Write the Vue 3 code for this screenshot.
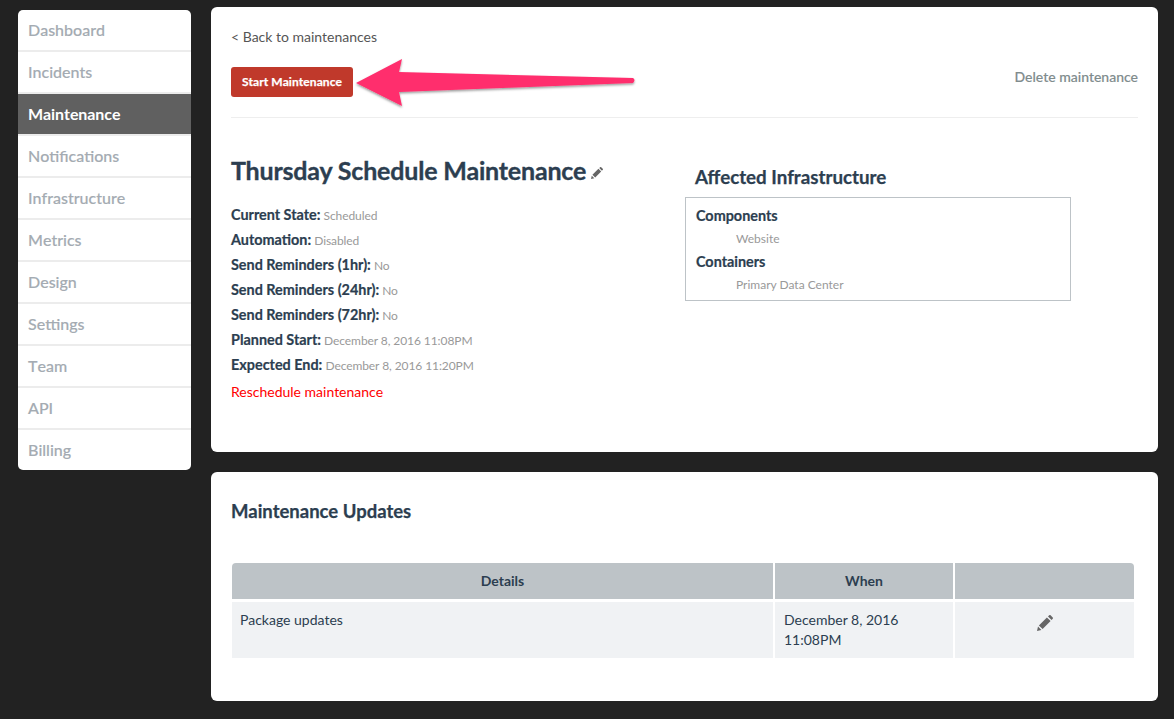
<template>
  <div class="page">
    <nav class="sidebar">
      <a
        v-for="item in navItems"
        :key="item"
        class="nav-item"
        :class="{ 'nav-item--active': item === 'Maintenance' }"
      >{{ item }}</a>
    </nav>

    <main class="content">
      <section class="card card--detail">
        <svg class="arrow" width="300" height="70" viewBox="0 0 300 70" aria-hidden="true">
          <defs>
            <filter id="arrow-shadow" x="-5%" y="-10%" width="110%" height="130%">
              <feDropShadow dx="0" dy="1.5" stdDeviation="1.2" flood-color="#000" flood-opacity="0.4" />
            </filter>
          </defs>
          <path
            d="M10 30 L56 6 L53 19 L287 25 Q290 27 287 30 L53 39 L56 53 Z"
            fill="#ff2e6d"
            filter="url(#arrow-shadow)"
          />
        </svg>

        <a class="back-link">&lt; Back to maintenances</a>

        <div class="actions">
          <button class="start-btn" type="button">Start Maintenance</button>
          <a class="delete-link">Delete maintenance</a>
        </div>

        <div class="summary">
          <div class="summary-main">
            <h1 class="title">
              Thursday Schedule Maintenance
              <svg class="pencil pencil--small" viewBox="0 0 16 16" aria-hidden="true">
                <path :d="pencilPath" />
              </svg>
            </h1>
            <ul class="facts">
              <li v-for="fact in facts" :key="fact.label" class="fact">
                <strong>{{ fact.label }}:</strong> <span>{{ fact.value }}</span>
              </li>
            </ul>
            <a class="reschedule">Reschedule maintenance</a>
          </div>

          <div class="summary-side">
            <h2 class="side-title">Affected Infrastructure</h2>
            <div class="infra-box">
              <template v-for="group in infrastructure" :key="group.name">
                <h3 class="infra-name">{{ group.name }}</h3>
                <p class="infra-item">{{ group.item }}</p>
              </template>
            </div>
          </div>
        </div>
      </section>

      <section class="card card--updates">
        <h2 class="updates-title">Maintenance Updates</h2>
        <table class="updates">
          <thead>
            <tr>
              <th class="col-details">Details</th>
              <th class="col-when">When</th>
              <th class="col-edit"></th>
            </tr>
          </thead>
          <tbody>
            <tr>
              <td>Package updates</td>
              <td>December 8, 2016<br />11:08PM</td>
              <td class="edit-cell">
                <svg class="pencil pencil--large" viewBox="0 0 16 16" aria-hidden="true">
                  <path :d="pencilPath" />
                </svg>
              </td>
            </tr>
          </tbody>
        </table>
      </section>
    </main>
  </div>
</template>

<script setup>
// solid pencil: tip, body and eraser as three separate pieces
const pencilPath = 'M0 16 L1 11.6 L4.4 15 Z M1.9 10.4 L9.9 2.4 L13.6 6.1 L5.6 14.1 Z M11 1.4 L12.2 .3 a1 1 0 0 1 1.4 0 L15.7 2.4 a1 1 0 0 1 0 1.4 L14.6 5 Z'

const navItems = [
  'Dashboard',
  'Incidents',
  'Maintenance',
  'Notifications',
  'Infrastructure',
  'Metrics',
  'Design',
  'Settings',
  'Team',
  'API',
  'Billing'
]

const facts = [
  { label: 'Current State', value: 'Scheduled' },
  { label: 'Automation', value: 'Disabled' },
  { label: 'Send Reminders (1hr)', value: 'No' },
  { label: 'Send Reminders (24hr)', value: 'No' },
  { label: 'Send Reminders (72hr)', value: 'No' },
  { label: 'Planned Start', value: 'December 8, 2016 11:08PM' },
  { label: 'Expected End', value: 'December 8, 2016 11:20PM' }
]

const infrastructure = [
  { name: 'Components', item: 'Website' },
  { name: 'Containers', item: 'Primary Data Center' }
]
</script>

<style>
html,
body {
  background: #222;
}
</style>

<style scoped>
.page {
  display: flex;
  align-items: flex-start;
  gap: 20px;
  height: 719px;
  padding: 7px 16px 0 18px;
  box-sizing: border-box;
  overflow: hidden;
  background: #222;
  font-family: Lato, "Open Sans", sans-serif;
  color: #2c3e50;
}

.sidebar {
  display: flex;
  flex-direction: column;
  flex: none;
  width: 173px;
  margin-top: 3px;
  border-radius: 5px;
  overflow: hidden;
  background: #fff;
}

.nav-item {
  display: block;
  height: 40px;
  padding-left: 10px;
  border-bottom: 2px solid #ececec;
  font-size: 16px;
  font-weight: 500;
  line-height: 40px;
  color: #a4abb2;
  font-kerning: none;
  -webkit-text-stroke: 0.15px #a4abb2;
}

.nav-item:last-child {
  border-bottom: 0;
}

.nav-item--active {
  background: #606060;
  color: #fff;
  font-weight: 700;
  -webkit-text-stroke: 0;
  letter-spacing: -0.08px;
}

.content {
  display: flex;
  flex-direction: column;
  flex: 1;
  gap: 20px;
  min-width: 0;
}

.card {
  position: relative;
  box-sizing: border-box;
  padding: 0 20px;
  border-radius: 6px;
  background: #fff;
}

.card--detail {
  height: 445px;
  padding-top: 21px;
}

.card--updates {
  height: 229px;
  padding-top: 27px;
}

.arrow {
  position: absolute;
  left: 135px;
  top: 46px;
}

.back-link {
  display: block;
  font-size: 14px;
  line-height: 18px;
  color: #555;
}

.actions {
  display: flex;
  justify-content: space-between;
  align-items: flex-start;
  height: 50px;
  margin-top: 21px;
  border-bottom: 1px solid #eee;
}

.start-btn {
  width: 122px;
  height: 30px;
  padding: 0;
  border: 0;
  border-radius: 3px;
  background: #c0392b;
  color: #fff;
  font: 700 12px/30px Lato, sans-serif;
  letter-spacing: 0.1px;
  -webkit-text-stroke: 0.25px #fff;
}

.delete-link {
  font-size: 14px;
  font-weight: 500;
  line-height: 20px;
  color: #7f8c8d;
  -webkit-text-stroke: 0.15px #7f8c8d;
}

.summary {
  display: flex;
}

.summary-main {
  width: 454px;
  flex: none;
}

.title {
  margin: 36px 0 0;
  font-size: 25px;
  font-weight: 700;
  line-height: 32px;
  letter-spacing: -0.18px;
  -webkit-text-stroke: 0.35px #2c3e50;
}

.pencil {
  fill: #666;
  stroke: none;
}

.pencil--small {
  width: 12px;
  height: 12px;
  margin-left: -1px;
  vertical-align: 1px;
  -webkit-text-stroke: 0;
}

.pencil--large {
  display: block;
  width: 16px;
  height: 16px;
  margin: 0 auto;
}

.facts {
  margin: 16px 0 0;
  padding: 0;
  list-style: none;
}

.fact {
  height: 25px;
  font-size: 12px;
  line-height: 25px;
  color: #999;
}

.fact span {
  letter-spacing: -0.08px;
}

.fact strong {
  font-size: 14.4px;
  color: #2c3e50;
  -webkit-text-stroke: 0.2px #2c3e50;
}

.reschedule {
  display: block;
  margin-top: 5px;
  font-size: 14px;
  line-height: 20px;
  color: #f00;
}

.summary-side {
  flex: 1;
}

.side-title {
  margin: 47px 0 0 10px;
  font-size: 18.75px;
  font-weight: 700;
  line-height: 24px;
  -webkit-text-stroke: 0.25px #2c3e50;
}

.infra-box {
  box-sizing: border-box;
  width: 386px;
  height: 104px;
  margin-top: 8px;
  padding: 8px 10px;
  border: 1px solid #bdc3c7;
}

.infra-name {
  margin: 0;
  font-size: 14.4px;
  font-weight: 700;
  line-height: 20px;
  -webkit-text-stroke: 0.2px #2c3e50;
}

.infra-item {
  margin: 1px 0 2px 40px;
  font-size: 12px;
  line-height: 23px;
  color: #999;
}

.updates-title {
  margin: 0;
  font-size: 18.5px;
  font-weight: 700;
  line-height: 24px;
  -webkit-text-stroke: 0.25px #2c3e50;
}

.updates {
  width: 906px;
  margin: 38px 0 0 -1px;
  border-collapse: separate;
  border-spacing: 2px;
  table-layout: fixed;
  font-size: 14px;
}

.updates th {
  height: 37px;
  padding: 0 0 2px;
  box-sizing: border-box;
  border-bottom: 1px solid #fff;
  background: #bdc3c7;
  background-clip: padding-box;
  font-weight: 700;
  text-align: center;
}

.col-details {
  width: 541px;
}

.col-when {
  width: 178px;
}

.updates th:first-child {
  border-top-left-radius: 4px;
}

.updates th:last-child {
  border-top-right-radius: 4px;
}

.updates td {
  height: 56px;
  padding: 8px 9px;
  box-sizing: border-box;
  background: #f0f2f4;
  line-height: 20px;
  vertical-align: top;
}

.updates td:first-child {
  padding-left: 8px;
}

.updates td.edit-cell {
  padding: 13px 9px 0 10px;
}
</style>
